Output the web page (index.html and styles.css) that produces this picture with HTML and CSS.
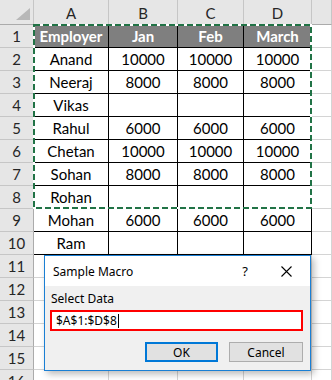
FILE: index.html
```html
<!DOCTYPE html>
<html lang="en">
<head>
<meta charset="utf-8">
<title>Sample Macro</title>
<link rel="stylesheet" href="styles.css">
</head>
<body>
<div class="sheet">
  <div class="corner"><svg class="tri" width="33" height="24" viewBox="0 0 33 24"><polygon points="30,8 30,20 16,20" fill="#b8b8b8"/></svg></div>
  <div class="ch">A</div><div class="ch">B</div><div class="ch">C</div><div class="ch">D</div><div class="ch"></div>

  <div class="rh">1</div><div class="c b hd">Employer</div><div class="c b hd">Jan</div><div class="c b hd">Feb</div><div class="c b hd">March</div><div class="c"></div>
  <div class="rh">2</div><div class="c b">Anand</div><div class="c b">10000</div><div class="c b">10000</div><div class="c b">10000</div><div class="c"></div>
  <div class="rh">3</div><div class="c b">Neeraj</div><div class="c b">8000</div><div class="c b">8000</div><div class="c b">8000</div><div class="c"></div>
  <div class="rh">4</div><div class="c b">Vikas</div><div class="c b"></div><div class="c b"></div><div class="c b"></div><div class="c"></div>
  <div class="rh">5</div><div class="c b">Rahul</div><div class="c b">6000</div><div class="c b">6000</div><div class="c b">6000</div><div class="c"></div>
  <div class="rh">6</div><div class="c b">Chetan</div><div class="c b">10000</div><div class="c b">10000</div><div class="c b">10000</div><div class="c"></div>
  <div class="rh">7</div><div class="c b">Sohan</div><div class="c b">8000</div><div class="c b">8000</div><div class="c b">8000</div><div class="c"></div>
  <div class="rh">8</div><div class="c b">Rohan</div><div class="c b"></div><div class="c b"></div><div class="c b"></div><div class="c"></div>
  <div class="rh">9</div><div class="c b">Mohan</div><div class="c b">6000</div><div class="c b">6000</div><div class="c b">6000</div><div class="c"></div>
  <div class="rh">10</div><div class="c b">Ram</div><div class="c b"></div><div class="c b"></div><div class="c b"></div><div class="c"></div>
  <div class="rh">11</div><div class="c"></div><div class="c"></div><div class="c"></div><div class="c"></div><div class="c"></div>
  <div class="rh">12</div><div class="c"></div><div class="c"></div><div class="c"></div><div class="c"></div><div class="c"></div>
  <div class="rh">13</div><div class="c"></div><div class="c"></div><div class="c"></div><div class="c"></div><div class="c"></div>
  <div class="rh">14</div><div class="c"></div><div class="c"></div><div class="c"></div><div class="c"></div><div class="c"></div>
  <div class="rh">15</div><div class="c"></div><div class="c"></div><div class="c"></div><div class="c"></div><div class="c"></div>
  <div class="rh">16</div><div class="c"></div><div class="c"></div><div class="c"></div><div class="c"></div><div class="c"></div>
</div>

<!-- copy marquee around A1:D8 -->
<svg class="marquee" width="279" height="185" viewBox="0 0 279 185">
  <rect x="1" y="1" width="277" height="183" fill="none" stroke="#ffffff" stroke-width="2"/>
  <rect x="1" y="1" width="277" height="183" fill="none" stroke="#217346" stroke-width="2" stroke-dasharray="6 3"/>
</svg>

<div class="dialog">
  <div class="titlebar">
    <span class="title">Sample Macro</span>
    <span class="help">?</span>
    <svg class="close" width="11" height="11" viewBox="0 0 11 11"><path d="M0.5 0.5 L10.5 10.5 M10.5 0.5 L0.5 10.5" stroke="#000" stroke-width="1.1" fill="none"/></svg>
  </div>
  <div class="body">
    <div class="label">Select Data</div>
    <div class="input"><span>$A$1:$D$8</span><span class="caret"></span></div>
    <div class="buttons">
      <div class="btn ok">OK</div>
      <div class="btn">Cancel</div>
    </div>
  </div>
</div>
</body>
</html>
```

FILE: styles.css
```css
html, body {
  margin: 0;
  height: 380px;
  overflow: hidden;
  background: #ffffff;
}

body {
  position: relative;
  font-family: Lato, "Liberation Sans", sans-serif;
}

.sheet {
  display: grid;
  grid-template-columns: 34px 75px 69px 66px 68px 1fr;
  grid-template-rows: 25px;
  grid-auto-rows: 23px;
  width: 332px;
}

.sheet > div {
  box-sizing: border-box;
  border-right: 1px solid #d4d4d4;
  border-bottom: 1px solid #d4d4d4;
  display: flex;
  align-items: center;
  justify-content: center;
  font-size: 15px;
  color: #000;
  white-space: nowrap;
  overflow: hidden;
}

.sheet > .corner {
  background: #e6e6e6;
  border-right-color: #c6c6c6;
  border-bottom-color: #ababab;
  position: relative;
}

.tri {
  position: absolute;
  left: 0;
  top: 0;
}

.sheet > .ch {
  background: #e6e6e6;
  color: #262626;
  border-right-color: #c6c6c6;
  border-bottom-color: #ababab;
  padding-top: 2px;
}

.sheet > .rh {
  background: #e6e6e6;
  color: #262626;
  border-right-color: #ababab;
  border-bottom-color: #c6c6c6;
}

.sheet > .b {
  border-right-color: #000;
  border-bottom-color: #000;
}

.sheet > .hd {
  background: #7f7f7f;
  color: #ffffff;
  font-weight: 700;
}

.marquee {
  position: absolute;
  left: 33px;
  top: 24px;
}

.dialog {
  position: absolute;
  left: 44px;
  top: 255px;
  width: 267px;
  height: 116px;
  box-sizing: border-box;
  border: 1px solid #1a7fd4;
  background: #f0f0f0;
  box-shadow: 3px 3px 7px rgba(0, 0, 0, 0.28);
  font-family: "Noto Sans", "Open Sans", sans-serif;
  font-size: 12px;
  color: #000;
  display: flex;
  flex-direction: column;
}

.titlebar {
  height: 30px;
  background: #ffffff;
  display: flex;
  align-items: center;
  padding: 0 18px 0 8px;
}

.title {
  flex: 1;
}

.help {
  margin-right: 33px;
  font-size: 13px;
}

.body {
  padding: 5px 7px 7px 5px;
}

.label {
  line-height: 16px;
  padding-left: 1px;
  margin-bottom: 3px;
}

.input {
  height: 21px;
  box-sizing: border-box;
  border: 2px solid #ff0000;
  background: #ffffff;
  display: flex;
  align-items: center;
  padding-left: 4px;
}

.caret {
  width: 1px;
  height: 14px;
  background: #000;
  margin-left: 1px;
}

.buttons {
  display: flex;
  justify-content: flex-end;
  gap: 11px;
  margin-top: 11px;
}

.btn {
  width: 74px;
  height: 20px;
  box-sizing: border-box;
  border: 1px solid #adadad;
  background: #e1e1e1;
  display: flex;
  align-items: center;
  justify-content: center;
}

.btn.ok {
  width: 73px;
  border: 2px solid #0078d7;
}
```
